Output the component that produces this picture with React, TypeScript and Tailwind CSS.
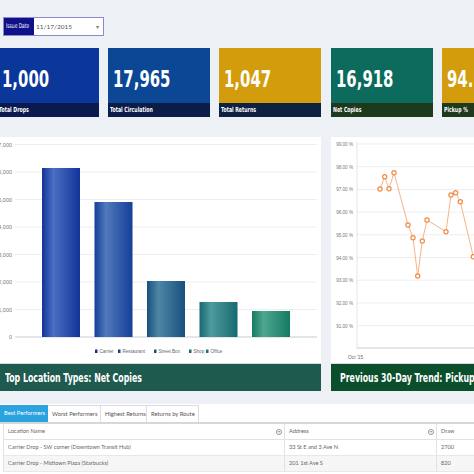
import React from 'react';

const kpis = [
  { value: '1,000', label: 'Total Drops', bg: 'bg-[#0b369a]', bar: 'bg-[#0a1a4e]' },
  { value: '17,965', label: 'Total Circulation', bg: 'bg-[#0b4795]', bar: 'bg-[#0b1c48]' },
  { value: '1,047', label: 'Total Returns', bg: 'bg-[#d39c0c]', bar: 'bg-[#0f2140]' },
  { value: '16,918', label: 'Net Copies', bg: 'bg-[#0c6b5c]', bar: 'bg-[#1e3a1e]' },
  { value: '94.1', label: 'Pickup %', bg: 'bg-[#d39c0c]', bar: 'bg-[#1e3a1e]' },
];

const bars = [
  { name: 'Carrier', top: 31, dark: '#12339a', light: '#4b6fc2' },
  { name: 'Restaurant', top: 65, dark: '#153f98', light: '#5079bd' },
  { name: 'Street Box', top: 144, dark: '#17507e', light: '#4f86a6' },
  { name: 'Shop', top: 165, dark: '#166a72', light: '#4f9a9c' },
  { name: 'Office', top: 174, dark: '#147a63', light: '#4fa68e' },
];

const trend: [number, number][] = [
  [49, 52], [53.7, 39.7], [58, 51.7], [63, 35.7], [77, 88], [82, 100.7], [86.7, 139],
  [91.3, 104], [96, 83], [115, 94.7], [120, 58], [124.7, 55.7], [129.3, 64.7], [142.3, 119.7],
  [147, 128], [151.7, 110],
];

const font = { fontFamily: '"DejaVu Sans Condensed", "DejaVu Sans", "Liberation Sans", sans-serif' };
const light = { fontFamily: 'Lato, "Open Sans", sans-serif' };

const BarChart = () => {
  const grid = [7.5, 35, 62.5, 90, 117.5, 145, 172.5];
  const labels = ['7,000', '6,000', '5,000', '4,000', '3,000', '2,000', '1,000'];
  return (
    <svg width="324" height="226" className="block">
      <defs>
        {bars.map((b, i) => (
          <linearGradient key={i} id={`bar${i}`} x1="0" x2="1" y1="0" y2="0">
            <stop offset="0" stopColor={b.dark} />
            <stop offset="0.3" stopColor={b.light} />
            <stop offset="1" stopColor={b.dark} />
          </linearGradient>
        ))}
      </defs>
      {grid.map((y, i) => (
        <g key={i}>
          <line x1="18" x2="320" y1={y} y2={y} stroke="#eceef1" strokeWidth="1" />
          <text x="15" y={y + 2} fontSize="5.5" fill="#777" textAnchor="end" fontFamily="Liberation Sans, sans-serif">{labels[i]}</text>
        </g>
      ))}
      <line x1="18" x2="320" y1="200" y2="200" stroke="#c8ccd2" strokeWidth="1" />
      <text x="15" y="202" fontSize="5.5" fill="#777" textAnchor="end" fontFamily="Liberation Sans, sans-serif">0</text>
      {bars.map((b, i) => (
        <rect key={i} x={45 + i * 52.5} y={b.top} width="38" height={200 - b.top} fill={`url(#bar${i})`} />
      ))}
      {bars.map((b, i) => {
        const xs = [98, 121, 157, 192, 209];
        return (
          <g key={i}>
            <rect x={xs[i]} y="212.5" width="2.5" height="3.5" fill={b.dark} />
            <text x={xs[i] + 4.5} y="216" fontSize="4.6" fill="#666" fontFamily="Liberation Sans, sans-serif">{b.name}</text>
          </g>
        );
      })}
    </svg>
  );
};

const TrendChart = () => {
  const labels = ['99.00 %', '98.00 %', '97.00 %', '96.00 %', '95.00 %', '94.00 %', '93.00 %', '92.00 %', '91.00 %'];
  const pts = trend.map(([x, y]) => `${x},${y}`).join(' ');
  return (
    <svg width="160" height="226" className="block">
      {labels.map((l, i) => {
        const y = 7 + i * 22.7;
        return (
          <g key={i}>
            <line x1="26" x2="160" y1={y} y2={y} stroke="#eceef1" strokeWidth="1" />
            <text x="22" y={y + 2} fontSize="4.6" fill="#777" textAnchor="end" fontFamily="Liberation Sans, sans-serif">{l}</text>
          </g>
        );
      })}
      <line x1="26" x2="26" y1="5" y2="211" stroke="#e2e5e9" strokeWidth="1" />
      <line x1="26" x2="160" y1="211" y2="211" stroke="#c8ccd2" strokeWidth="1" />
      <text x="17" y="222" fontSize="4.8" fill="#666" fontFamily="Liberation Sans, sans-serif">Oct '15</text>
      <polyline points={pts} fill="none" stroke="#f6b486" strokeWidth="1" />
      {trend.map(([x, y], i) => (
        <circle key={i} cx={x} cy={y} r="2.1" fill="#fff" stroke="#f08c42" strokeWidth="1.2" />
      ))}
    </svg>
  );
};

const Filter = () => (
  <span className="w-[6px] h-[6px] rounded-full border border-[#999] flex items-center justify-center text-[4px] leading-none text-[#888]">▾</span>
);

const App: React.FC = () => {
  const tabs = [
    { t: 'Best Performers', w: 'w-[48px]' },
    { t: 'Worst Performers', w: 'w-[53px]' },
    { t: 'Highest Returns', w: 'w-[46px]' },
    { t: 'Returns by Route', w: 'w-[52px]' },
  ];
  const rows = [
    { name: 'Carrier Drop - SW corner (Downtown Transit Hub)', addr: '33 St E and 3 Ave N', draw: '2700' },
    { name: 'Carrier Drop - Midtown Plaza (Starbucks)', addr: '201 1st Ave S', draw: '820' },
  ];

  return (
    <div className="w-[474px] h-[474px] overflow-hidden bg-[#edf0f4]">
      <div className="pt-[17px] pl-[3px]">
        <div className="flex h-[19px] w-[101px] border border-[#8a8ad0]">
          <div className="bg-[#0f1188] text-white text-[6.5px] flex items-center pl-[2px] w-[30px] whitespace-nowrap overflow-hidden" style={font}>
            <span className="inline-block origin-left scale-x-[0.75]">Issue Date</span>
          </div>
          <div className="flex-1 bg-white flex items-center justify-between px-[2px] text-[6.5px] text-[#555]" style={light}>
            <span>11/17/2015</span>
            <span className="text-[6px] text-[#777] pr-[2px]">▾</span>
          </div>
        </div>
      </div>

      <div className="flex gap-[9.3px] -ml-[3.3px] mt-[12px]">
        {kpis.map((k) => (
          <div key={k.label} className={`w-[102px] h-[69px] shrink-0 flex flex-col ${k.bg}`}>
            <div className="flex-1 flex items-end pl-[5px] pb-[12px] text-white text-[23px] font-bold leading-none whitespace-nowrap" style={font}>
              <span className="inline-block origin-left scale-x-[0.72]">{k.value}</span>
            </div>
            <div className={`h-[14px] ${k.bar} text-white text-[7px] font-bold flex items-center pl-[2px] whitespace-nowrap`} style={font}>
              <span className="inline-block origin-left scale-x-[0.74]">{k.label}</span>
            </div>
          </div>
        ))}
      </div>

      <div className="flex gap-[10px] -ml-[3px] mt-[20px]">
        <div className="w-[324px] shrink-0 bg-white flex flex-col">
          <BarChart />
          <div className="h-[28px] bg-[#1f5a4e] text-white text-[13px] font-bold flex items-center pl-[8px] whitespace-nowrap border-t border-[#d8dde2]" style={font}>
            <span className="inline-block origin-left scale-x-[0.67]">Top Location Types: Net Copies</span>
          </div>
        </div>
        <div className="w-[170px] shrink-0 bg-white flex flex-col">
          <TrendChart />
          <div className="h-[28px] bg-[#0b4e2b] text-white text-[13px] font-bold flex items-center pl-[9px] whitespace-nowrap border-t border-[#d8dde2]" style={font}>
            <span className="inline-block origin-left scale-x-[0.67]">Previous 30-Day Trend: Pickup %</span>
          </div>
        </div>
      </div>

      <div className="mt-[13px] bg-white h-[80px]">
        <div className="flex h-[20px] pt-[1px] border-b-2 border-[#d4d7db]" style={light}>
          {tabs.map((t, i) => (
            <div
              key={t.t}
              className={`${t.w} pl-[4px] flex items-center text-[5.8px] whitespace-nowrap overflow-hidden ${i === 0 ? 'bg-[#2ba3df] text-white' : 'text-[#555] border-t border-r border-[#dcdcdc]'}`}
            >
              {t.t}
            </div>
          ))}
        </div>
        <div className="ml-[3px] border-l border-[#e2e2e2] text-[5.6px] text-[#666] whitespace-nowrap" style={light}>
          <div className="flex h-[16px] border-b border-[#e2e2e2]">
            <div className="w-[281px] flex items-center justify-between pl-[4px] pr-[2px] border-r border-[#e2e2e2]">
              <span>Location Name</span>
              <Filter />
            </div>
            <div className="w-[152px] flex items-center justify-between pl-[4px] pr-[2px] border-r border-[#e2e2e2]">
              <span>Address</span>
              <Filter />
            </div>
            <div className="flex-1 flex items-center pl-[4px]">Draw</div>
          </div>
          {rows.map((r, i) => (
            <div key={r.name} className={`flex h-[16px] border-b border-[#e8e8e8] ${i === 1 ? 'bg-[#f6f6f6]' : ''}`}>
              <div className="w-[281px] flex items-center pl-[4px] border-r border-[#e2e2e2]">{r.name}</div>
              <div className="w-[152px] flex items-center pl-[4px] border-r border-[#e2e2e2]">{r.addr}</div>
              <div className="flex-1 flex items-center pl-[4px]">{r.draw}</div>
            </div>
          ))}
        </div>
      </div>
    </div>
  );
};

export default App;
